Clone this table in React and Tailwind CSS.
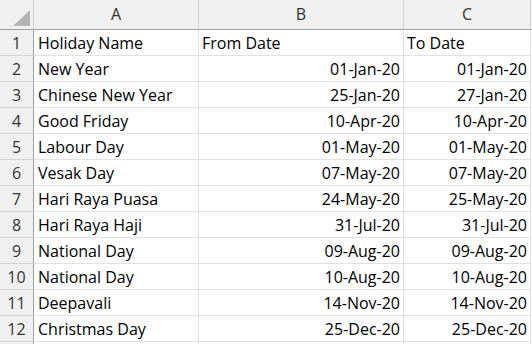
import React from "react";

const rows = [
  ["Holiday Name", "From Date", "To Date", true],
  ["New Year", "01-Jan-20", "01-Jan-20"],
  ["Chinese New Year", "25-Jan-20", "27-Jan-20"],
  ["Good Friday", "10-Apr-20", "10-Apr-20"],
  ["Labour Day", "01-May-20", "01-May-20"],
  ["Vesak Day", "07-May-20", "07-May-20"],
  ["Hari Raya Puasa", "24-May-20", "25-May-20"],
  ["Hari Raya Haji", "31-Jul-20", "31-Jul-20"],
  ["National Day", "09-Aug-20", "09-Aug-20"],
  ["National Day", "10-Aug-20", "10-Aug-20"],
  ["Deepavali", "14-Nov-20", "14-Nov-20"],
  ["Christmas Day", "25-Dec-20", "25-Dec-20"],
];

function App() {
  return (
    <div className="w-[532px] h-[344px] overflow-hidden bg-white text-[16px] leading-[20px] text-black font-['Open_Sans','Liberation_Sans',sans-serif]">
      <div className="grid grid-cols-[34px_165px_205px_127px_1px] grid-rows-[30px_repeat(13,26px)]">
        {/* column headers */}
        <div className="relative bg-[#f0f0f0] border-r border-b border-r-[#d4d4d4] border-b-[#9e9e9e]">
          <svg className="absolute left-0 top-0" width="34" height="30">
            <polygon points="13,26 30,26 30,10" fill="#b4b4b4" />
          </svg>
        </div>
        {["A", "B", "C"].map((c) => (
          <div
            key={c}
            className="bg-[#f0f0f0] border-r border-b border-r-[#d4d4d4] border-b-[#9e9e9e] flex items-center justify-center text-[#333] pb-[2px]"
          >
            {c}
          </div>
        ))}
        <div className="bg-[#f0f0f0] border-b border-b-[#9e9e9e]"></div>

        {rows.map((r, i) => (
          <React.Fragment key={i}>
            <div className="bg-[#f0f0f0] border-r border-b border-r-[#9e9e9e] border-b-[#d4d4d4] flex items-end justify-center pb-[2px] text-[#333]">
              {i + 1}
            </div>
            <div className="border-r border-b border-[#e1e1e1] flex items-end pl-[4px] pb-[2px] whitespace-nowrap">
              {r[0]}
            </div>
            <div className={`border-r border-b border-[#e1e1e1] flex items-end pb-[2px] px-[3px] whitespace-nowrap ${r[3] ? "justify-start" : "justify-end"}`}>
              {r[1]}
            </div>
            <div className={`border-r border-b border-[#e1e1e1] flex items-end pb-[2px] px-[3px] whitespace-nowrap ${r[3] ? "justify-start" : "justify-end"}`}>
              {r[2]}
            </div>
            <div></div>
          </React.Fragment>
        ))}
        <div className="bg-[#f0f0f0] border-r border-r-[#9e9e9e]"></div>
        <div className="border-r border-[#e1e1e1]"></div>
        <div className="border-r border-[#e1e1e1]"></div>
        <div className="border-r border-[#e1e1e1]"></div>
        <div></div>
      </div>
    </div>
  );
}

export default App;
